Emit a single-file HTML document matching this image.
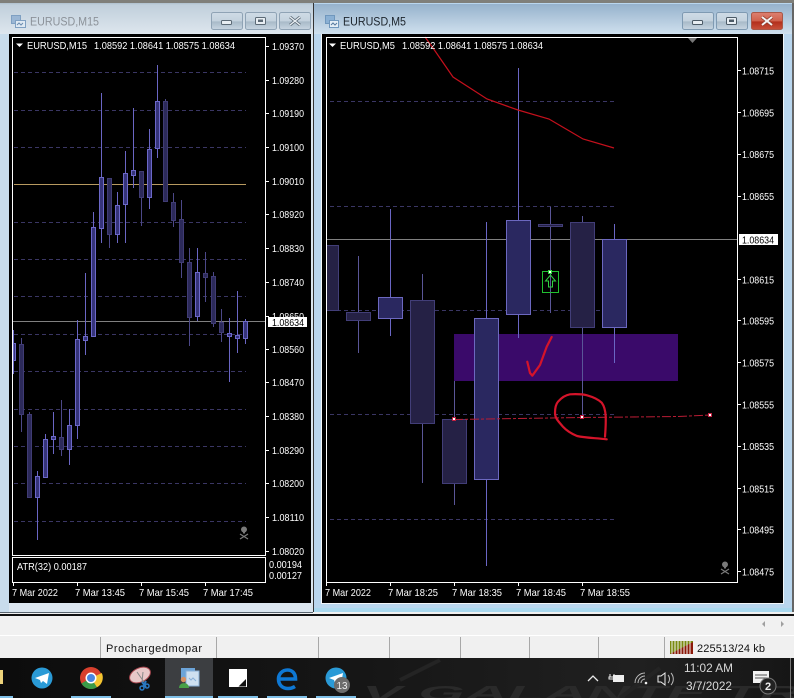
<!DOCTYPE html>
<html><head><meta charset="utf-8"><style>
html,body{margin:0;padding:0;background:#f0f0f0;width:794px;height:698px;overflow:hidden}
svg{display:block}
text{font-family:"Liberation Sans",sans-serif;font-size:10.5px;fill:#fff}
.grid{stroke:#3a3664;stroke-width:1;stroke-dasharray:4 3;fill:none}
.wb{stroke:#6a66c4;stroke-width:1;fill:none}
.wd{stroke:#4c4888;stroke-width:1;fill:none}
.b rect{fill:#2a2860;stroke:#6c68c0;stroke-width:1}
.d rect{fill:#252145;stroke:#423e78;stroke-width:1}
.lb rect{fill:#36347a;stroke:#6c68c8}
.ld rect{fill:#2c2a5a;stroke:#403c74}
</style></head><body>
<svg width="794" height="698" viewBox="0 0 794 698" xmlns="http://www.w3.org/2000/svg">
<defs>
<linearGradient id="tl" x1="0" y1="0" x2="0" y2="1"><stop offset="0" stop-color="#aebfce"/><stop offset=".06" stop-color="#c0cfdb"/><stop offset="1" stop-color="#dde6ee"/></linearGradient>
<linearGradient id="tr" x1="0" y1="0" x2="0" y2="1"><stop offset="0" stop-color="#96b2cc"/><stop offset="1" stop-color="#cfe0ee"/></linearGradient>
<linearGradient id="bt" x1="0" y1="0" x2="0" y2="1"><stop offset="0" stop-color="#cfdbe6"/><stop offset=".5" stop-color="#c4d2de"/><stop offset=".55" stop-color="#a8bac8"/><stop offset="1" stop-color="#c8d6e2"/></linearGradient>
<linearGradient id="br" x1="0" y1="0" x2="0" y2="1"><stop offset="0" stop-color="#dd8070"/><stop offset=".5" stop-color="#d0614c"/><stop offset=".55" stop-color="#b32f1c"/><stop offset="1" stop-color="#c8503a"/></linearGradient>
<linearGradient id="tb" x1="0" y1="0" x2="1" y2="0"><stop offset="0" stop-color="#0c0c0c"/><stop offset=".45" stop-color="#161616"/><stop offset=".8" stop-color="#202020"/><stop offset="1" stop-color="#161616"/></linearGradient>
</defs>
<!-- page -->
<rect width="794" height="698" fill="#f0f0f0"/>
<rect width="794" height="4" fill="#7f7f7a"/>
<!-- left window -->
<rect x="0" y="3" width="313" height="609" fill="#dbe6ef"/>
<rect x="0" y="3" width="313" height="31" fill="url(#tl)"/>
<rect x="0" y="34" width="9" height="578" fill="#c8dcec"/>
<rect x="311" y="34" width="2" height="578" fill="#dbe6ef"/>
<rect x="0" y="612" width="313" height="1" fill="#5a6670"/>
<!-- right window -->
<rect x="313" y="3" width="481" height="609" fill="#b9d6ee"/>
<rect x="314" y="4" width="478" height="30" fill="url(#tr)"/>
<rect x="313" y="3" width="1" height="609" fill="#333"/>
<rect x="321" y="34" width="1" height="570" fill="#f4f8fb"/>
<rect x="783" y="34" width="1" height="570" fill="#f0f5f9"/>
<rect x="321" y="603" width="463" height="1" fill="#f0f5f9"/>
<rect x="314" y="608" width="478" height="4" fill="#a9d8ee"/>
<rect x="792" y="3" width="2" height="609" fill="#666"/>
<rect x="0" y="614" width="794" height="2" fill="#111"/>
<!-- left title -->
<g>
<rect x="11.500" y="15.500" width="9" height="8" fill="#9ab6d4" stroke="#7fa0c2"/>
<rect x="15.500" y="20.500" width="10" height="7" fill="#dfe9f2" stroke="#7fa0c2"/>
<path d="M17 25l2-2 2 2 2-2" stroke="#6a8cb0" fill="none"/>
</g>
<text x="30" y="25.500" textLength="69" lengthAdjust="spacingAndGlyphs" style="font-size:12px;fill:#8c9299">EURUSD,M15</text>
<g stroke="#8fa3b5">
<rect x="211.500" y="12.500" width="31" height="17" rx="2" fill="url(#bt)"/>
<rect x="245.500" y="12.500" width="31" height="17" rx="2" fill="url(#bt)"/>
<rect x="279.500" y="12.500" width="31" height="17" rx="2" fill="url(#bt)"/>
</g>
<rect x="221.500" y="20.500" width="10" height="4" rx="1" fill="#e8eef3" stroke="#5c6a76"/>
<rect x="255.500" y="17.500" width="10" height="7" rx="1" fill="#e8eef3" stroke="#5c6a76"/>
<rect x="258" y="19.500" width="5" height="2.500" fill="#5c6a76"/>
<path d="M290 17l10 8M300 17l-10 8" stroke="#5c6a76" stroke-width="3"/>
<path d="M290 17l10 8M300 17l-10 8" stroke="#e8eef3" stroke-width="1.400"/>
<!-- right title -->
<g>
<rect x="325.500" y="15.500" width="9" height="8" fill="#8ab0d4" stroke="#6f97bd"/>
<rect x="329.500" y="20.500" width="9" height="7" fill="#e4eef6" stroke="#6f97bd"/>
<path d="M331 25l2-2 2 2 2-2" stroke="#55799e" fill="none"/>
</g>
<text x="343" y="25.500" textLength="63" lengthAdjust="spacingAndGlyphs" style="font-size:12px;fill:#1c242c">EURUSD,M5</text>
<g stroke="#7f9ab2">
<rect x="682.500" y="12.500" width="31" height="17" rx="2" fill="url(#bt)"/>
<rect x="716.500" y="12.500" width="31" height="17" rx="2" fill="url(#bt)"/>
</g>
<rect x="751.500" y="12.500" width="31" height="17" rx="2" fill="url(#br)" stroke="#a85848"/>
<rect x="692.500" y="20.500" width="10" height="4" rx="1" fill="#e8eef3" stroke="#4c5a66"/>
<rect x="726.500" y="17.500" width="10" height="7" rx="1" fill="#e8eef3" stroke="#4c5a66"/>
<rect x="729" y="19.500" width="5" height="2.500" fill="#4c5a66"/>
<path d="M762 17l10 8M772 17l-10 8" stroke="#8c3a2a" stroke-width="3.400"/>
<path d="M762 17l10 8M772 17l-10 8" stroke="#f4f4f4" stroke-width="2"/>

<!-- left chart -->
<rect x="9" y="34" width="302" height="569" fill="#000"/>
<path class="grid" d="M14 72.500H246M14 110.500H246M14 147.500H246M14 222.500H246M14 259.500H246M14 296.500H246M14 334.500H246M14 371.500H246M14 409.500H246M14 446.500H246M14 483.500H246M14 521.500H246"/>
<path d="M14 184.500H246" stroke="#b89a60" fill="none"/>
<path d="M13 321.500H266" stroke="#808080" fill="none"/>
<path class="wb" d="M13.500 330V374M37.500 471V540M45.500 434V477M53.500 412V454M69.500 409V465M77.500 320V439M85.500 273V355M93.500 212V337M101.500 93V243M117.500 192V243M125.500 151V243M133.500 108V188M149.500 129V209M157.500 65V158M197.500 248V321M229.500 318V382M237.500 291V353M245.500 319V344"/>
<path class="wd" d="M21.500 338V432M29.500 412V497M61.500 400V456M109.500 178V248M141.500 171V226M165.500 99V201M173.500 193V227M181.500 200V278M189.500 248V346M205.500 252V302M213.500 272V327M221.500 309V342"/>
<g class="b lb">
<rect x="13.500" y="343.500" width="2" height="17"/>
<rect x="35.500" y="476.500" width="4" height="21"/>
<rect x="43.500" y="439.500" width="4" height="38"/>
<rect x="51.500" y="436.500" width="4" height="3"/>
<rect x="67.500" y="425.500" width="4" height="24"/>
<rect x="75.500" y="339.500" width="4" height="86"/>
<rect x="83.500" y="336.500" width="4" height="4"/>
<rect x="91.500" y="227.500" width="4" height="109"/>
<rect x="99.500" y="177.500" width="4" height="51"/>
<rect x="115.500" y="205.500" width="4" height="29"/>
<rect x="123.500" y="173.500" width="4" height="31"/>
<rect x="131.500" y="170.500" width="4" height="5"/>
<rect x="147.500" y="149.500" width="4" height="48"/>
<rect x="155.500" y="101.500" width="4" height="47"/>
<rect x="195.500" y="272.500" width="4" height="44"/>
<rect x="227.500" y="333.500" width="4" height="3"/>
<rect x="235.500" y="335.500" width="4" height="3"/>
<rect x="243.500" y="321.500" width="4" height="17"/>
</g>
<g class="d ld">
<rect x="19.500" y="344.500" width="4" height="70"/>
<rect x="27.500" y="414.500" width="4" height="83"/>
<rect x="59.500" y="437.500" width="4" height="12"/>
<rect x="107.500" y="178.500" width="4" height="56"/>
<rect x="139.500" y="171.500" width="4" height="26"/>
<rect x="163.500" y="101.500" width="4" height="100"/>
<rect x="171.500" y="202.500" width="4" height="18"/>
<rect x="179.500" y="219.500" width="4" height="43"/>
<rect x="187.500" y="262.500" width="4" height="55"/>
<rect x="203.500" y="273.500" width="4" height="4"/>
<rect x="211.500" y="276.500" width="4" height="47"/>
<rect x="219.500" y="322.500" width="4" height="10"/>
</g>
<rect x="12.500" y="37.500" width="253" height="518" fill="none" stroke="#fff"/>
<rect x="12.500" y="557.500" width="253" height="25" fill="none" stroke="#fff"/>
<path d="M266 46.500h3M266 80.500h3M266 113.500h3M266 147.500h3M266 181.500h3M266 214.500h3M266 248.500h3M266 282.500h3M266 316.500h3M266 349.500h3M266 382.500h3M266 416.500h3M266 450.500h3M266 483.500h3M266 517.500h3M266 551.500h3M13.500 583v3M77.500 583v3M141.500 583v3M205.500 583v3" stroke="#fff" fill="none"/>
<path d="M16 43.500h7l-3.500 3.500z" fill="#fff"/>
<text x="27" y="49" textLength="60" lengthAdjust="spacingAndGlyphs">EURUSD,M15</text>
<text x="94" y="49" textLength="141" lengthAdjust="spacingAndGlyphs">1.08592 1.08641 1.08575 1.08634</text>
<g>
<text x="272" y="50" textLength="32" lengthAdjust="spacingAndGlyphs">1.09370</text>
<text x="272" y="84" textLength="32" lengthAdjust="spacingAndGlyphs">1.09280</text>
<text x="272" y="117" textLength="32" lengthAdjust="spacingAndGlyphs">1.09190</text>
<text x="272" y="151" textLength="32" lengthAdjust="spacingAndGlyphs">1.09100</text>
<text x="272" y="185" textLength="32" lengthAdjust="spacingAndGlyphs">1.09010</text>
<text x="272" y="218" textLength="32" lengthAdjust="spacingAndGlyphs">1.08920</text>
<text x="272" y="252" textLength="32" lengthAdjust="spacingAndGlyphs">1.08830</text>
<text x="272" y="286" textLength="32" lengthAdjust="spacingAndGlyphs">1.08740</text>
<text x="272" y="320" textLength="32" lengthAdjust="spacingAndGlyphs">1.08650</text>
<text x="272" y="353" textLength="32" lengthAdjust="spacingAndGlyphs">1.08560</text>
<text x="272" y="386" textLength="32" lengthAdjust="spacingAndGlyphs">1.08470</text>
<text x="272" y="420" textLength="32" lengthAdjust="spacingAndGlyphs">1.08380</text>
<text x="272" y="454" textLength="32" lengthAdjust="spacingAndGlyphs">1.08290</text>
<text x="272" y="487" textLength="32" lengthAdjust="spacingAndGlyphs">1.08200</text>
<text x="272" y="521" textLength="32" lengthAdjust="spacingAndGlyphs">1.08110</text>
<text x="272" y="555" textLength="32" lengthAdjust="spacingAndGlyphs">1.08020</text>
<text x="269" y="568" textLength="33" lengthAdjust="spacingAndGlyphs">0.00194</text>
<text x="269" y="579" textLength="33" lengthAdjust="spacingAndGlyphs">0.00127</text>
</g>
<rect x="268" y="317" width="39" height="10" fill="#fff"/>
<text x="272" y="326" textLength="32" lengthAdjust="spacingAndGlyphs" style="fill:#000">1.08634</text>
<text x="17" y="570" textLength="70" lengthAdjust="spacingAndGlyphs">ATR(32) 0.00187</text>
<text x="12" y="596" textLength="46" lengthAdjust="spacingAndGlyphs">7 Mar 2022</text>
<text x="75" y="596" textLength="50" lengthAdjust="spacingAndGlyphs">7 Mar 13:45</text>
<text x="139" y="596" textLength="50" lengthAdjust="spacingAndGlyphs">7 Mar 15:45</text>
<text x="203" y="596" textLength="50" lengthAdjust="spacingAndGlyphs">7 Mar 17:45</text>
<g fill="#7a7a7a" stroke="#7a7a7a">
<circle cx="244" cy="529.500" r="2.500"/>
<rect x="243" y="531" width="2" height="2.500" stroke="none"/>
<path d="M240 534l8 5M248 534l-8 5" fill="none" stroke-width="1.200"/>
</g>

<!-- right chart -->
<rect x="322" y="34" width="461" height="569" fill="#000"/>
<path d="M454 334h224v47H454z" fill="#3a0a6a"/>
<path class="grid" d="M330 101.500H615M330 206.500H615M330 310.500H615M330 414.500H615M330 519.500H615"/>
<path d="M326 239.500H738" stroke="#808080" fill="none"/>
<path class="wd" style="stroke:#5a5698" d="M358.500 256V353M422.500 274V483M454.500 381V505M550.500 207V313M582.500 216V415"/>
<path class="wb" d="M326.500 172V318M390.500 209V336M486.500 222V566M518.500 68V338M614.500 224V363"/>
<g class="d">
<rect x="326.500" y="245.500" width="12" height="65"/>
<rect x="346.500" y="312.500" width="24" height="8"/>
<rect x="410.500" y="300.500" width="24" height="123"/>
<rect x="442.500" y="419.500" width="24" height="64"/>
<rect x="538.500" y="224.500" width="24" height="2"/>
<rect x="570.500" y="222.500" width="24" height="105"/>
</g>
<g class="b">
<rect x="378.500" y="297.500" width="24" height="21"/>
<rect x="474.500" y="318.500" width="24" height="161"/>
<rect x="506.500" y="220.500" width="24" height="94"/>
<rect x="602.500" y="239.500" width="24" height="88"/>
</g>
<path d="M425 37L433 48L453 77L487 99L518 110L549 119L583 139L614 148" fill="none" stroke="#c4101c" stroke-width="1.200"/>
<path d="M454 419.500L582 417.500L678 416.500L710 415" fill="none" stroke="#b81c34" stroke-dasharray="9 2 3 2"/>
<path d="M527.300 361.700L530 373L532.300 375.700L540 365L546.700 346.700L551.700 337" fill="none" stroke="#d4142a" stroke-width="2.200" stroke-linejoin="round" stroke-linecap="round"/>
<path d="M606.700 439.300C597 438 586 438 577 436C570 433 566 430 563 426.700C558 421 555 418 555 413C555 408 556 404 558 401.700C562 397 566 395 570 394.300C576 394 582 394 587 395.300C593 397 598 399 601.700 402.700C605 407 605.500 412 605.700 416.700C606 424 605.500 430 605 436.700" fill="none" stroke="#d4142a" stroke-width="2.200" stroke-linecap="round"/>
<g fill="#fff" stroke="#c02040"><rect x="452.500" y="417.500" width="3" height="3"/><rect x="580.500" y="415.500" width="3" height="3"/><rect x="708.500" y="413.500" width="3" height="3"/></g>
<rect x="542.500" y="271.500" width="16" height="21" fill="none" stroke="#20c030"/>
<path d="M550.500 275l-5 6h3v6h4v-6h3z" fill="none" stroke="#30d040"/>
<rect x="548.500" y="270.500" width="3" height="3" fill="#fff" stroke="#30d040"/>
<rect x="326.500" y="37.500" width="411" height="545" fill="none" stroke="#fff"/>
<path d="M738 70.500h3M738 112.500h3M738 154.500h3M738 196.500h3M738 279.500h3M738 320.500h3M738 362.500h3M738 404.500h3M738 446.500h3M738 488.500h3M738 529.500h3M738 571.500h3M326.500 583v3M390.500 583v3M454.500 583v3M518.500 583v3M582.500 583v3" stroke="#fff" fill="none"/>
<path d="M688 38h9l-4.500 5z" fill="#777"/>
<path d="M329 43.500h7l-3.500 3.500z" fill="#fff"/>
<text x="340" y="49" textLength="55" lengthAdjust="spacingAndGlyphs">EURUSD,M5</text>
<text x="402" y="49" textLength="141" lengthAdjust="spacingAndGlyphs">1.08592 1.08641 1.08575 1.08634</text>
<g>
<text x="742" y="74.500" textLength="32" lengthAdjust="spacingAndGlyphs">1.08715</text>
<text x="742" y="116.500" textLength="32" lengthAdjust="spacingAndGlyphs">1.08695</text>
<text x="742" y="158" textLength="32" lengthAdjust="spacingAndGlyphs">1.08675</text>
<text x="742" y="200" textLength="32" lengthAdjust="spacingAndGlyphs">1.08655</text>
<text x="742" y="283.500" textLength="32" lengthAdjust="spacingAndGlyphs">1.08615</text>
<text x="742" y="324.500" textLength="32" lengthAdjust="spacingAndGlyphs">1.08595</text>
<text x="742" y="366.500" textLength="32" lengthAdjust="spacingAndGlyphs">1.08575</text>
<text x="742" y="408.500" textLength="32" lengthAdjust="spacingAndGlyphs">1.08555</text>
<text x="742" y="450" textLength="32" lengthAdjust="spacingAndGlyphs">1.08535</text>
<text x="742" y="492.500" textLength="32" lengthAdjust="spacingAndGlyphs">1.08515</text>
<text x="742" y="533.500" textLength="32" lengthAdjust="spacingAndGlyphs">1.08495</text>
<text x="742" y="575.500" textLength="32" lengthAdjust="spacingAndGlyphs">1.08475</text>
</g>
<rect x="739" y="234" width="39" height="11" fill="#fff"/>
<text x="742" y="243.500" textLength="32" lengthAdjust="spacingAndGlyphs" style="fill:#000">1.08634</text>
<text x="325" y="596" textLength="46" lengthAdjust="spacingAndGlyphs">7 Mar 2022</text>
<text x="388" y="596" textLength="50" lengthAdjust="spacingAndGlyphs">7 Mar 18:25</text>
<text x="452" y="596" textLength="50" lengthAdjust="spacingAndGlyphs">7 Mar 18:35</text>
<text x="516" y="596" textLength="50" lengthAdjust="spacingAndGlyphs">7 Mar 18:45</text>
<text x="580" y="596" textLength="50" lengthAdjust="spacingAndGlyphs">7 Mar 18:55</text>
<g fill="#7a7a7a" stroke="#7a7a7a">
<circle cx="725" cy="564.500" r="2.500"/>
<rect x="724" y="566" width="2" height="2.500" stroke="none"/>
<path d="M721 569l8 5M729 569l-8 5" fill="none" stroke-width="1.200"/>
</g>

<!-- status area -->
<rect x="0" y="616" width="794" height="19" fill="#f1f1f1"/>
<rect x="0" y="635" width="794" height="1" fill="#fff"/>
<path d="M765 621v6l-3-3zM781 621v6l3-3z" fill="#a0a0a0"/>
<path d="M100.500 637V658M216.500 637V658M318.500 637V658M389.500 637V658M460.500 637V658M529.500 637V658M598.500 637V658M664.500 637V658" stroke="#a8a8a8"/>
<text x="106" y="652" textLength="96" lengthAdjust="spacing" style="font-size:11px;fill:#111">Prochargedmopar</text>
<g>
<path d="M670 641h23v13h-23z" fill="#7a8a10"/>
<path d="M670 654l23-12v12z" fill="#8c1808"/>
<path d="M672 641v13M675 641v13M678 641v13M681 641v13M684 641v13M687 641v13M690 641v13" stroke="#f0f0f0"/>
</g>
<text x="697" y="652" textLength="68" lengthAdjust="spacing" style="font-size:11px;fill:#111">225513/24 kb</text>

<!-- taskbar -->
<rect x="0" y="658" width="794" height="40" fill="url(#tb)"/>
<text x="362" y="700" textLength="440" lengthAdjust="spacingAndGlyphs" style="font-size:20px;font-weight:bold;font-style:italic;fill:#2a2a2a">V GALANTE TR</text>
<path d="M400 680L440 660M620 698L660 668" stroke="#242424" stroke-width="4" fill="none"/>
<rect x="790" y="658" width="1" height="40" fill="#777"/>
<rect x="165" y="658" width="48" height="40" fill="#3c3e41"/>
<rect x="0" y="670" width="3" height="14" fill="#ecd27a"/>
<g fill="#7fc0e8">
<rect x="0" y="696" width="13" height="2"/><rect x="71" y="696" width="40" height="2"/><rect x="165" y="696" width="48" height="2"/><rect x="218" y="696" width="40" height="2"/><rect x="267" y="696" width="40" height="2"/><rect x="316" y="696" width="40" height="2"/>
</g>
<!-- telegram -->
<circle cx="42" cy="678" r="10.500" fill="#2a9ad6"/>
<path d="M35 678l14-5-2 11-4-3-2 2-1-3z" fill="#fff"/>
<!-- chrome -->
<circle cx="91" cy="678" r="11" fill="#d8402e"/>
<path d="M91 678L81.500 683.500A11 11 0 0 0 97 687.300z" fill="#3a9a48"/>
<path d="M91 678L97 687.300A11 11 0 0 0 101.800 673z" fill="#f4c430"/>
<circle cx="91" cy="678" r="5.500" fill="#fff"/>
<circle cx="91" cy="678" r="4" fill="#4a86e0"/>
<!-- snip -->
<ellipse cx="140" cy="675" rx="11" ry="7" transform="rotate(-25 140 675)" fill="#e8c8c8" stroke="#a84850"/>
<path d="M143 672l-1 10M137 672l7 10" stroke="#888"/>
<path d="M142 682l4 5M146 681l-3 6" stroke="#2a78c0" stroke-width="2"/>
<circle cx="147" cy="686" r="2" fill="none" stroke="#2a78c0" stroke-width="1.500"/>
<circle cx="142" cy="688" r="2" fill="none" stroke="#2a78c0" stroke-width="1.500"/>
<!-- mt4 -->
<rect x="181" y="668" width="14" height="11" fill="#6ca4d8"/>
<rect x="186" y="671" width="13" height="15" fill="#cfe0f0" stroke="#8ab0d8"/>
<path d="M189 678l2 2 2-2 3 3" stroke="#8ab0d8" fill="none"/>
<circle cx="183.500" cy="679.500" r="2.700" fill="#d89060"/>
<path d="M179 688c0-6.500 10-6.500 10 0z" fill="#48a048"/>
<!-- sticky -->
<rect x="229" y="669" width="18" height="18" fill="#fff"/>
<path d="M238.500 686.500L246 679V686.500z" fill="#111"/>
<!-- edge -->
<path d="M279 679h16.500c0-6-3.500-9-8-9c-5 0-9 4-9 9c0 6 4 9.500 9.500 9.500c3 0 5-.8 7-2" fill="none" stroke="#0e78d4" stroke-width="3.600"/>
<!-- telegram 2 -->
<circle cx="336" cy="678" r="10.500" fill="#2a9ad6"/>
<path d="M329 678l14-5-2 11-4-3-2 2-1-3z" fill="#fff"/>
<circle cx="342" cy="685" r="8" fill="#6c6c6c"/>
<text x="336.500" y="689" textLength="11" lengthAdjust="spacingAndGlyphs" style="font-size:10px;fill:#eee">13</text>
<!-- tray -->
<path d="M588 681l5-5 5 5" stroke="#e8e8e8" stroke-width="1.300" fill="none"/>
<path d="M610 674v3M614 674v3M609 677h6v2h-6z" stroke="#eee" fill="none"/>
<rect x="613" y="675" width="11" height="7" fill="#eee"/>
<path d="M635 683a10 10 0 0 1 10-10M638 683a7 7 0 0 1 7-7M641 683a4 4 0 0 1 4-4" stroke="#bbb" fill="none"/>
<circle cx="646" cy="683" r="1.300" fill="#eee"/>
<path d="M658 676h3l4-3v12l-4-3h-3z" fill="none" stroke="#eee"/>
<path d="M668 675a6 6 0 0 1 0 8M671 673a9 9 0 0 1 0 12" stroke="#bbb" fill="none"/>
<text x="684" y="672" textLength="49" lengthAdjust="spacingAndGlyphs" style="font-size:12px;fill:#d8d8d8">11:02 AM</text>
<text x="686" y="690" textLength="46" lengthAdjust="spacingAndGlyphs" style="font-size:12px;fill:#d8d8d8">3/7/2022</text>
<path d="M753 671h16v12h-5l-3 3v-3h-8z" fill="#f2f2f2"/>
<path d="M755 675h12M755 678h12" stroke="#555"/>
<circle cx="768" cy="686" r="8" fill="#222" stroke="#777"/>
<text x="765" y="690" style="font-size:11px;font-weight:bold;fill:#eee">2</text>
</svg>
</body></html>
